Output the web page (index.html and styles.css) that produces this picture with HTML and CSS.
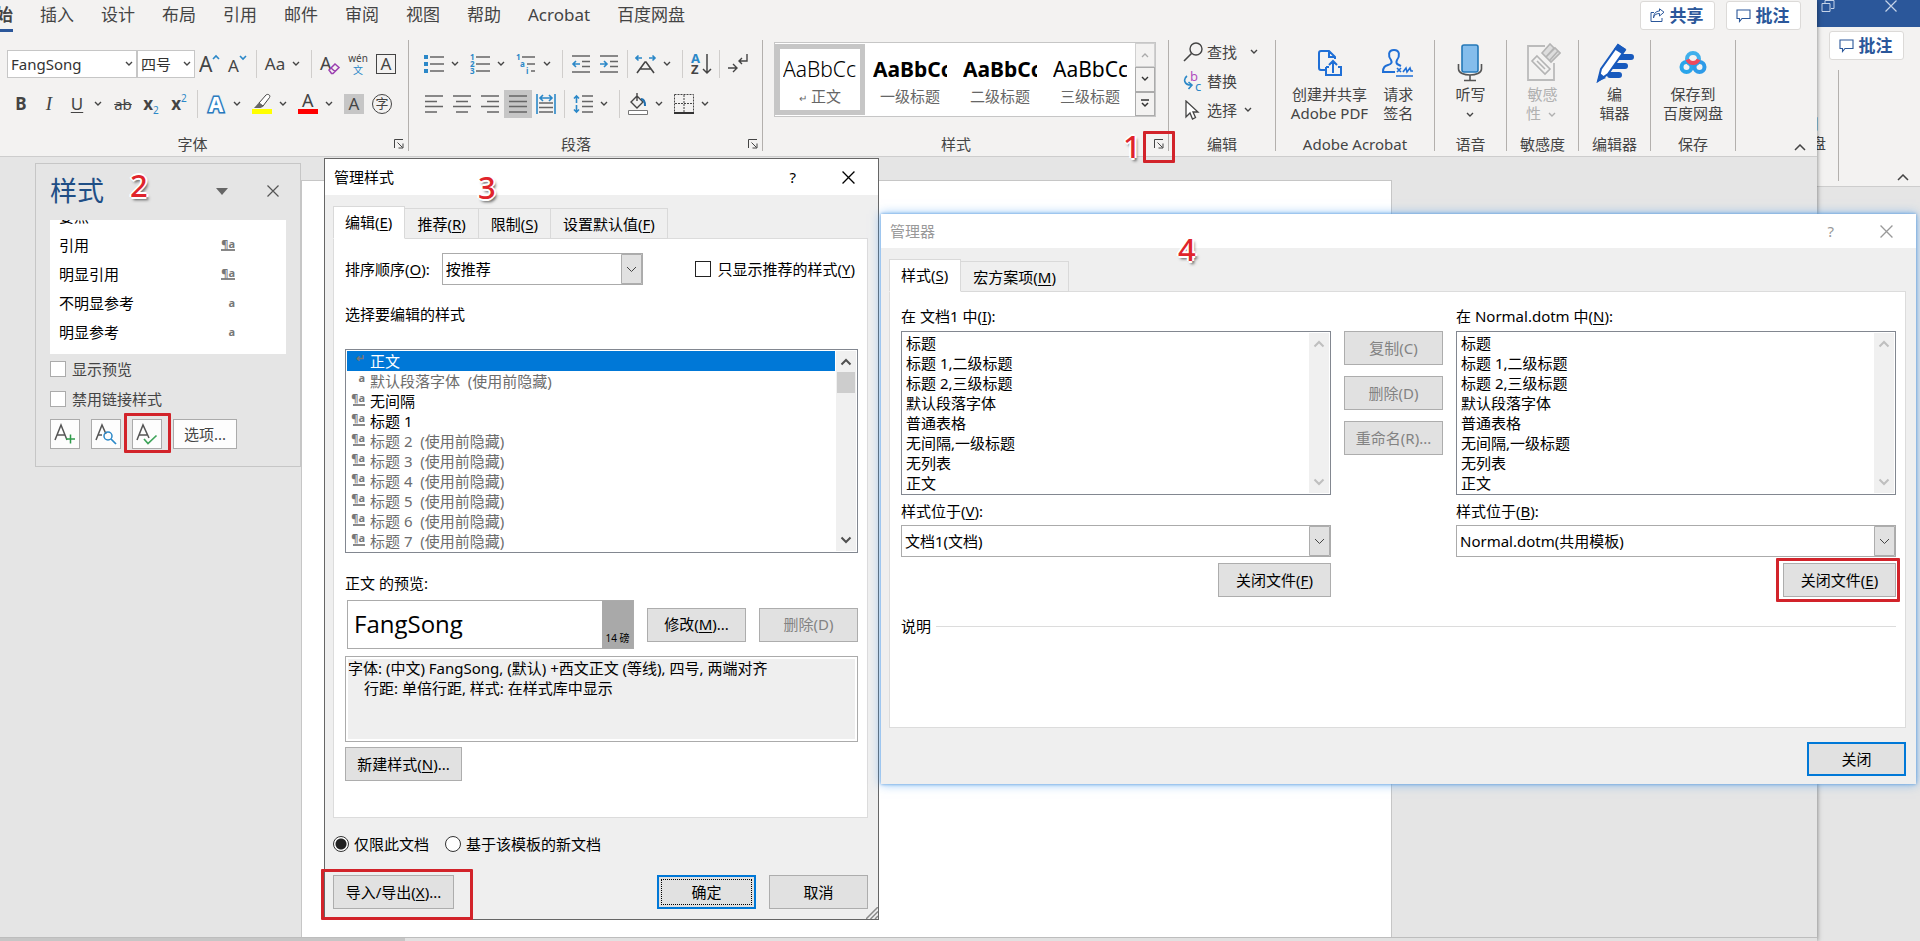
FILE: index.html
```html
<!DOCTYPE html>
<html lang="zh-CN">
<head>
    <meta charset="UTF-8">
    <meta name="viewport" content="width=device-width, initial-scale=1.0">
    <title>管理样式</title>
    <link rel="stylesheet" href="styles.css">
</head>
<body>
    <!-- Shared icons -->
    <svg class="sprite" aria-hidden="true">
        <symbol id="chev" viewBox="0 0 8 6"><path d="M1 1l3 3 3-3" fill="none" stroke="currentColor" stroke-width="1.4"/></symbol>
        <symbol id="launch" viewBox="0 0 10 10"><path d="M.5 9V.5H9M3.500 3.500l5 5M9 4.500V9H4.500" fill="none" stroke="currentColor"/></symbol>
        <symbol id="caret" viewBox="0 0 12 7"><path d="M1 6l5-5 5 5" fill="none" stroke="currentColor" stroke-width="1.5"/></symbol>
        <symbol id="sb-up" viewBox="0 0 12 8"><path d="M1.500 6.500L6 2l4.500 4.500" fill="none" stroke="currentColor" stroke-width="2"/></symbol>
        <symbol id="sb-down" viewBox="0 0 12 8"><path d="M1.500 1.500L6 6l4.500-4.500" fill="none" stroke="currentColor" stroke-width="2"/></symbol>
        <symbol id="close" viewBox="0 0 12 12"><path d="M.5.5l11 11M11.500.5l-11 11" fill="none" stroke="currentColor" stroke-width="1.2"/></symbol>
        <symbol id="comment" viewBox="0 0 15 14"><path d="M1 1h13v8.500H6L3.500 12.500V9.500H1z" fill="none" stroke="currentColor" stroke-width="1.1"/></symbol>
    </svg>

    <!-- Window behind -->
    <div class="window back-window">
        <div class="back-title">
            <svg width="14" height="12" viewBox="0 0 14 12"><path d="M1 3.500h8v8H1zM4 3V.5h9v8h-3" fill="none" stroke="#c5d3e8"/></svg>
            <svg width="12" height="12"><use href="#close"/></svg>
        </div>
        <div class="tab-row">
            <div class="tab-actions"><button class="pill"><svg width="15" height="14"><use href="#comment"/></svg>批注</button></div>
        </div>
        <div class="ribbon">
            <div class="group g-save"><div class="bigs"><button class="big"><span class="pic"></span><span>保存到<br>百度网盘</span></button></div></div>
            <button class="collapse" aria-label="折叠功能区"><svg width="12" height="7"><use href="#caret"/></svg></button>
        </div>
    </div>

    <!-- Main window -->
    <div class="window main-window">
        <div class="tab-row">
            <nav class="tabs">
                <a href="#" class="current">开始</a>
                <a href="#">插入</a>
                <a href="#">设计</a>
                <a href="#">布局</a>
                <a href="#">引用</a>
                <a href="#">邮件</a>
                <a href="#">审阅</a>
                <a href="#">视图</a>
                <a href="#">帮助</a>
                <a href="#">Acrobat</a>
                <a href="#">百度网盘</a>
            </nav>
            <div class="tab-actions">
                <button class="pill"><svg width="15" height="15" viewBox="0 0 15 15"><path d="M4 4.500H1v9h11V10M3.500 10c.5-3 2.500-4.500 6-4.500V8L14 4.200 9.500.8V3C5.500 3.200 3.500 6 3.500 10z" fill="none" stroke="currentColor"/></svg>共享</button>
                <button class="pill"><svg width="15" height="14"><use href="#comment"/></svg>批注</button>
            </div>
        </div>

        <div class="ribbon">
            <section class="group g-font">
                <div class="tools">
                    <select class="font-select" aria-label="字体"><option>FangSong</option></select>
                    <select class="size-select" aria-label="字号"><option>四号</option></select>
                    <button class="tool" aria-label="增大字号"><svg width="22" height="22" viewBox="0 0 22 22"><text x="0" y="19" font-size="21">A</text><path d="M14 6l3-3 3 3" class="blue"/></svg></button>
                    <button class="tool" aria-label="减小字号"><svg width="22" height="22" viewBox="0 0 22 22"><text x="1" y="19" font-size="17">A</text><path d="M13 3l3 3 3-3" class="blue"/></svg></button>
                    <span class="sep"></span>
                    <button class="tool">Aa</button><svg class="chev"><use href="#chev"/></svg>
                    <span class="sep"></span>
                    <button class="tool" aria-label="清除格式"><svg width="22" height="22" viewBox="0 0 22 22"><text x="1" y="17" font-size="18">A</text><path d="M10 17l6-6 4 3.500-6 6h-1.500zM12 15l4 3.500" fill="#f3f2f1" stroke="#9b3fb0" stroke-width="1.500"/></svg></button>
                    <button class="tool pinyin">wén<b>文</b></button>
                    <button class="tool" aria-label="字符边框"><span class="boxed">A</span></button>
                </div>
                <div class="tools">
                    <button class="tool"><b>B</b></button>
                    <button class="tool"><i>I</i></button>
                    <button class="tool"><u>U</u></button><svg class="chev"><use href="#chev"/></svg>
                    <button class="tool"><s>ab</s></button>
                    <button class="tool"><b>x</b><sub>2</sub></button>
                    <button class="tool"><b>x</b><sup>2</sup></button>
                    <span class="sep"></span>
                    <button class="tool" aria-label="文本效果"><span class="glow">A</span></button><svg class="chev"><use href="#chev"/></svg>
                    <button class="tool" aria-label="突出显示"><svg width="22" height="22" viewBox="0 0 22 22"><path d="M8 10l7-8c1.500-1.500 5 0 3.500 2.500L12 13z" fill="#fff" stroke="#444"/><path d="M8 9.500l4.500 4-3 1.500H3z" fill="#666"/><path d="M1 16h20v5H1z" fill="#ff0"/></svg></button><svg class="chev"><use href="#chev"/></svg>
                    <button class="tool" aria-label="字体颜色"><svg width="22" height="22" viewBox="0 0 22 22"><text x="5" y="14" font-size="18">A</text><path d="M1 16h20v5H1z" fill="#f00"/></svg></button><svg class="chev"><use href="#chev"/></svg>
                    <button class="tool" aria-label="字符底纹"><span class="shaded">A</span></button>
                    <button class="tool" aria-label="带圈字符"><span class="circled">字</span></button>
                </div>
                <div class="caption"><span>字体</span><button class="launch" aria-label="字体设置"><svg width="10" height="10"><use href="#launch"/></svg></button></div>
            </section>

            <section class="group g-para">
                <div class="tools">
                    <button class="tool" aria-label="项目符号"><svg width="20" height="20" viewBox="0 0 20 20"><path d="M0 1h4v4H0zM0 8h4v4H0zM0 15h4v4H0z" fill="#2b88c8"/><path d="M6 3h14M6 10h14M6 17h14" class="line"/></svg></button><svg class="chev"><use href="#chev"/></svg>
                    <button class="tool" aria-label="编号"><svg width="20" height="20" viewBox="0 0 20 20"><g class="num"><text x="0" y="6">1</text><text x="0" y="13">2</text><text x="0" y="20">3</text></g><path d="M6 3h14M6 10h14M6 17h14" class="line"/></svg></button><svg class="chev"><use href="#chev"/></svg>
                    <button class="tool" aria-label="多级列表"><svg width="20" height="20" viewBox="0 0 20 20"><g class="num"><text x="0" y="6">1</text><text x="4" y="13">a</text><text x="10" y="20">i</text></g><path d="M6 3h13M11 10h8M15 17h4" class="line"/></svg></button><svg class="chev"><use href="#chev"/></svg>
                    <span class="sep"></span>
                    <button class="tool" aria-label="减少缩进"><svg width="20" height="20" viewBox="0 0 20 20"><path d="M1 2h18M11 7.500h8M11 12.500h8M1 18h18" class="line"/><path d="M9 10H2m3-3l-3 3 3 3" class="blue"/></svg></button>
                    <button class="tool" aria-label="增加缩进"><svg width="20" height="20" viewBox="0 0 20 20"><path d="M1 2h18M11 7.500h8M11 12.500h8M1 18h18" class="line"/><path d="M1 10h7M5 7l3 3-3 3" class="blue"/></svg></button>
                    <span class="sep"></span>
                    <button class="tool" aria-label="中文版式"><svg width="22" height="22" viewBox="0 0 22 22"><path d="M2 20l8-11h1l8 11M5.500 16h10" fill="none" stroke="#444" stroke-width="1.600"/><path d="M7 5H1m2.500-2.500L1 5l2.500 2.500M14 5h6m-2.500-2.500L20 5l-2.500 2.500" class="blue"/></svg></button><svg class="chev"><use href="#chev"/></svg>
                    <span class="sep"></span>
                    <button class="tool" aria-label="排序"><svg width="22" height="22" viewBox="0 0 22 22"><text x="1" y="10" font-size="13" font-weight="700" class="t-blue">A</text><text x="1" y="21" font-size="13" font-weight="700">Z</text><path d="M17 1v19m-4-4l4 4 4-4" fill="none" stroke="#444" stroke-width="1.500"/></svg></button>
                    <span class="sep"></span>
                    <button class="tool" aria-label="显示编辑标记"><svg width="22" height="22" viewBox="0 0 22 22"><path d="M20 1v7h-8m3-3l-3 3 3 3M1 15h9m-4-4l4 4-4 4" fill="none" stroke="#444" stroke-width="1.400"/></svg></button>
                </div>
                <div class="tools">
                    <button class="tool" aria-label="左对齐"><svg width="18" height="18" viewBox="0 0 18 18"><path d="M0 1h18M0 6.500h12M0 11.500h18M0 17h12" class="line"/></svg></button>
                    <button class="tool" aria-label="居中"><svg width="18" height="18" viewBox="0 0 18 18"><path d="M0 1h18M3 6.500h12M0 11.500h18M3 17h12" class="line"/></svg></button>
                    <button class="tool" aria-label="右对齐"><svg width="18" height="18" viewBox="0 0 18 18"><path d="M0 1h18M6 6.500h12M0 11.500h18M6 17h12" class="line"/></svg></button>
                    <button class="tool active" aria-label="两端对齐"><svg width="18" height="18" viewBox="0 0 18 18"><path d="M0 1h18M0 6.500h18M0 11.500h18M0 17h18" class="line"/></svg></button>
                    <button class="tool" aria-label="分散对齐"><svg width="20" height="20" viewBox="0 0 20 20"><path d="M3 9h14M3 13.500h14M3 18h14" class="line"/><path d="M1 0v20M19 0v20M4 4h12M7 1L4 4l3 3M13 1l3 3-3 3" class="blue"/></svg></button>
                    <span class="sep"></span>
                    <button class="tool" aria-label="行距"><svg width="20" height="20" viewBox="0 0 20 20"><path d="M9 2h11M9 7.500h11M9 12.500h11M9 18h11" class="line"/><path d="M3.500 9V2M1 4.500L3.500 2 6 4.500M3.500 11v7M1 15.500L3.500 18 6 15.500" class="blue"/></svg></button><svg class="chev"><use href="#chev"/></svg>
                    <span class="sep"></span>
                    <button class="tool" aria-label="底纹"><svg width="22" height="22" viewBox="0 0 22 22"><path d="M4 9l6-6 6 6-6 6zM10 3V0M10 3v5" fill="none" stroke="#444" stroke-width="1.400"/><path d="M14 6c3 0 4 3 4 7" fill="none" stroke="#1f6fb0" stroke-width="2"/><path d="M1.500 17.500h19v4h-19z" fill="#fff" stroke="#777"/></svg></button><svg class="chev"><use href="#chev"/></svg>
                    <button class="tool" aria-label="边框"><svg width="20" height="20" viewBox="0 0 20 20"><path d="M.5.5h19v18H.5zM10 1v17M1 9.500h18" fill="none" stroke="#444" stroke-dasharray="2 1"/><path d="M0 19h20" stroke="#333" stroke-width="2"/></svg></button><svg class="chev"><use href="#chev"/></svg>
                </div>
                <div class="caption"><span>段落</span><button class="launch" aria-label="段落设置"><svg width="10" height="10"><use href="#launch"/></svg></button></div>
            </section>

            <section class="group g-styles">
                <div class="gallery">
                    <button class="style-card selected"><span class="sample light">AaBbCcDd</span><span class="name"><small>↵</small> 正文</span></button>
                    <button class="style-card"><span class="sample heavy">AaBbCcDd</span><span class="name">一级标题</span></button>
                    <button class="style-card"><span class="sample heavy">AaBbCcDd</span><span class="name">二级标题</span></button>
                    <button class="style-card"><span class="sample">AaBbCcDd</span><span class="name">三级标题</span></button>
                    <div class="gallery-nav">
                        <button class="off" aria-label="上一行"><svg width="8" height="6" viewBox="0 0 8 6"><path d="M1 5l3-3 3 3" fill="none" stroke="currentColor" stroke-width="1.300"/></svg></button>
                        <button aria-label="下一行"><svg width="8" height="6"><use href="#chev"/></svg></button>
                        <button aria-label="其他"><svg width="8" height="9" viewBox="0 0 8 9"><path d="M0 1h8M1 4l3 3 3-3" fill="none" stroke="currentColor" stroke-width="1.500"/></svg></button>
                    </div>
                </div>
                <div class="caption"><span>样式</span><button class="launch" aria-label="样式窗格"><svg width="10" height="10"><use href="#launch"/></svg></button></div>
            </section>

            <section class="group g-edit">
                <div class="edits">
                    <button><svg width="20" height="20" viewBox="0 0 20 20"><circle cx="13" cy="7" r="6" fill="none" stroke="#444" stroke-width="1.400"/><path d="M8.500 11.500L1 19" stroke="#444" stroke-width="1.600"/></svg>查找<svg class="chev far"><use href="#chev"/></svg></button>
                    <button><svg width="20" height="20" viewBox="0 0 20 20"><text x="7" y="10" font-size="13" class="t-purple">b</text><text x="12" y="20" font-size="13" class="t-blue">c</text><path d="M4 5C0 8 1 14 8 14M5.500 11L9 14l-3.500 4" class="blue"/></svg>替换</button>
                    <button><svg width="20" height="20" viewBox="0 0 20 20"><path d="M3 1v16l4-4 2.500 6 3-1.500L10 12h5z" fill="#fff" stroke="#444" stroke-width="1.300"/></svg>选择<svg class="chev"><use href="#chev"/></svg></button>
                </div>
                <div class="caption"><span>编辑</span></div>
            </section>

            <section class="group g-adobe">
                <div class="bigs">
                    <button class="big"><span class="pic"><svg width="26" height="28" viewBox="0 0 26 28"><path d="M8 21H4c-1.500 0-2-.8-2-2V4c0-1.500.7-2 2-2h8l6 6v2M12 2v6h6M16 24V12m-4 4l4-4 4 4M9 18v8h15v-8h-3M9 18h3" fill="none" stroke="#1f6fd6" stroke-width="2"/></svg></span><span>创建并共享<br>Adobe PDF</span></button>
                    <button class="big"><span class="pic"><svg width="32" height="30" viewBox="0 0 32 30"><path d="M13 24H1c0-5 2-6 5-7 4-1 4-3 3-5-3-4-3-10 3-10s6 6 3 10c-1 2-1 4 2 5l2 1" fill="none" stroke="#1f6fd6" stroke-width="2"/><path d="M15 20l4 4m0-4l-4 4m6 0l3-4 1 4 3-4 1 3h2M14 28h17" fill="none" stroke="#1f6fd6" stroke-width="1.600"/></svg></span><span>请求<br>签名</span></button>
                </div>
                <div class="caption"><span>Adobe Acrobat</span></div>
            </section>

            <section class="group g-voice">
                <div class="bigs"><button class="big"><span class="pic"><svg width="26" height="38" viewBox="0 0 26 38"><path d="M1.500 20v5c0 8 23 8 23 0v-5M13 31v5M7 36.500h12" fill="none" stroke="#555" stroke-width="1.600"/><rect x="5" y="1" width="16" height="27" rx="2" fill="#84bdec" stroke="#2478b8" stroke-width="1.600"/></svg></span><span>听写<br><svg class="chev"><use href="#chev"/></svg></span></button></div>
                <div class="caption"><span>语音</span></div>
            </section>

            <section class="group g-sense">
                <div class="bigs"><button class="big" disabled><span class="pic"><svg width="36" height="40" viewBox="0 0 36 40"><path d="M20 3H3v34h26V20" fill="none" stroke="#bbb" stroke-width="1.800"/><path d="M12 13l13 13-5 5L7 18zM12 18l8 8" fill="none" stroke="#b4b4b4" stroke-width="1.600"/><path d="M17 10l8-9 4 4-8 9zM21 14l9-9 5 5-9 9zM25 17l8-9" fill="#ddd" stroke="#b4b4b4" stroke-width="1.600"/></svg></span><span>敏感<br>性 <svg class="chev"><use href="#chev"/></svg></span></button></div>
                <div class="caption"><span>敏感度</span></div>
            </section>

            <section class="group g-editor">
                <div class="bigs"><button class="big"><span class="pic"><svg width="38" height="40" viewBox="0 0 38 40"><path d="M23 14h12M17 23h12M14 32h9" stroke="#185abd" stroke-width="6" stroke-linecap="round"/><path d="M2 38l3-12L22 2l7 5-17 24z" fill="#fff" stroke="#185abd" stroke-width="2"/><path d="M22 1l8 5-4 5-8-5zM1 39l3-9 6 5z" fill="#185abd"/></svg></span><span>编<br>辑器</span></button></div>
                <div class="caption"><span>编辑器</span></div>
            </section>

            <section class="group g-save">
                <div class="bigs"><button class="big"><span class="pic"><svg width="28" height="24" viewBox="0 0 28 24"><g fill="none" stroke-width="4"><circle cx="14" cy="8" r="6" stroke="#40b0ec"/><circle cx="7.500" cy="16" r="5" stroke="#2aa5ea"/><circle cx="20.500" cy="16" r="5" stroke="#2e9be8"/><path d="M8.500 8.500a6 6 0 0 0 11 0" stroke="#ee4a5e"/></g></svg></span><span>保存到<br>百度网盘</span></button></div>
                <div class="caption"><span>保存</span></div>
            </section>
            <button class="collapse" aria-label="折叠功能区"><svg width="12" height="7"><use href="#caret"/></svg></button>
        </div>

        <main class="workspace">
            <!-- Styles pane -->
            <aside class="pane">
                <header>
                    <h2>样式</h2>
                    <button aria-label="窗格选项"><svg width="12" height="7"><path d="M0 0h12L6 7z" fill="#666"/></svg></button>
                    <button aria-label="关闭窗格"><svg width="12" height="12"><use href="#close"/></svg></button>
                </header>
                <ul class="pane-list">
                    <li>要点</li>
                    <li>引用<span class="para">¶a</span></li>
                    <li>明显引用<span class="para">¶a</span></li>
                    <li>不明显参考<span>a</span></li>
                    <li>明显参考<span>a</span></li>
                </ul>
                <label class="check"><input type="checkbox"><span>显示预览</span></label>
                <label class="check"><input type="checkbox"><span>禁用链接样式</span></label>
                <div class="pane-buttons">
                    <button aria-label="新建样式"><svg width="22" height="24" viewBox="0 0 22 24"><path d="M1 18L7 3l6 15M3 13h8" fill="none" stroke="#555" stroke-width="1.500"/><path d="M12 17h9M16.500 12.500v9" stroke="#2f9a4a" stroke-width="1.500"/></svg></button>
                    <button aria-label="样式检查器"><svg width="22" height="24" viewBox="0 0 22 24"><path d="M1 18L7 3l4 9M3 13h4" fill="none" stroke="#555" stroke-width="1.500"/><circle cx="13" cy="14" r="4" fill="none" stroke="#2b88c8" stroke-width="1.500"/><path d="M16 17l5 5" stroke="#2b88c8" stroke-width="1.700"/></svg></button>
                    <button aria-label="管理样式"><svg width="22" height="24" viewBox="0 0 22 24"><path d="M1 18L7 3l6 13M3 13h8" fill="none" stroke="#555" stroke-width="1.500"/><path d="M8 17l4 4.500 8.500-8" fill="none" stroke="#3fa45a" stroke-width="1.700"/></svg></button>
                    <button class="options">选项...</button>
                </div>
            </aside>
            <div class="page"></div>
        </main>
        <div class="statusbar"></div>
    </div>

    <!-- Manage styles dialog -->
    <div class="window dialog manage" role="dialog" aria-label="管理样式">
        <header class="dialog-title"><h1>管理样式</h1><button aria-label="帮助">?</button><button aria-label="关闭"><svg width="13" height="13"><use href="#close"/></svg></button></header>
        <div class="dialog-body">
            <div class="dialog-tabs">
                <button class="on">编辑(<u>E</u>)</button>
                <button>推荐(<u>R</u>)</button>
                <button>限制(<u>S</u>)</button>
                <button>设置默认值(<u>F</u>)</button>
            </div>
            <div class="panel">
                <div class="sort-row">
                    <label for="sort">排序顺序(<u>O</u>):</label>
                    <select id="sort" class="combo"><option>按推荐</option></select>
                    <label class="check dark"><input type="checkbox"><span>只显示推荐的样式(<u>Y</u>)</span></label>
                </div>
                <p class="list-label">选择要编辑的样式</p>
                <div class="listbox">
                    <ul>
                        <li class="picked"><span class="mark">↵</span>正文</li>
                        <li class="dim"><span class="mark">a</span>默认段落字体&nbsp; (使用前隐藏)</li>
                        <li><span class="mark para">¶a</span>无间隔</li>
                        <li><span class="mark para">¶a</span>标题 1</li>
                        <li class="dim"><span class="mark para">¶a</span>标题 2&nbsp; (使用前隐藏)</li>
                        <li class="dim"><span class="mark para">¶a</span>标题 3&nbsp; (使用前隐藏)</li>
                        <li class="dim"><span class="mark para">¶a</span>标题 4&nbsp; (使用前隐藏)</li>
                        <li class="dim"><span class="mark para">¶a</span>标题 5&nbsp; (使用前隐藏)</li>
                        <li class="dim"><span class="mark para">¶a</span>标题 6&nbsp; (使用前隐藏)</li>
                        <li class="dim"><span class="mark para">¶a</span>标题 7&nbsp; (使用前隐藏)</li>
                    </ul>
                    <div class="scrollbar"><svg width="12" height="8"><use href="#sb-up"/></svg><span class="thumb"></span><svg width="12" height="8"><use href="#sb-down"/></svg></div>
                </div>
                <p class="preview-label">正文 的预览:</p>
                <div class="preview-row">
                    <div class="preview"><span>FangSong</span><small>14 磅</small></div>
                    <button class="btn">修改(<u>M</u>)...</button>
                    <button class="btn" disabled>删除(D)</button>
                </div>
                <div class="description">字体: (中文) FangSong, (默认) +西文正文 (等线), 四号, 两端对齐<p>行距: 单倍行距, 样式: 在样式库中显示</p></div>
                <button class="btn new-style">新建样式(<u>N</u>)...</button>
            </div>
            <div class="radios">
                <label><input type="radio" name="scope" checked>仅限此文档</label>
                <label><input type="radio" name="scope">基于该模板的新文档</label>
            </div>
            <footer>
                <button class="btn import">导入/导出(<u>X</u>)...</button>
                <button class="btn default"><span>确定</span></button>
                <button class="btn">取消</button>
            </footer>
        </div>
        <svg class="grip" width="12" height="12"><path d="M0 12L12 0M4.500 12L12 4.500M9 12l3-3" stroke="#8a8a8a" stroke-width="1.500"/></svg>
    </div>

    <!-- Organizer dialog -->
    <div class="window dialog organizer" role="dialog" aria-label="管理器">
        <header class="dialog-title"><h1>管理器</h1><button aria-label="帮助">?</button><button aria-label="关闭"><svg width="13" height="13"><use href="#close"/></svg></button></header>
        <div class="dialog-body">
            <div class="dialog-tabs">
                <button class="on">样式(<u>S</u>)</button>
                <button>宏方案项(<u>M</u>)</button>
            </div>
            <div class="panel">
                <div class="columns">
                    <div class="column">
                        <p>在 文档1 中(<u>I</u>):</p>
                        <div class="listbox">
                            <ul>
                                <li>标题</li>
                                <li>标题 1,二级标题</li>
                                <li>标题 2,三级标题</li>
                                <li>默认段落字体</li>
                                <li>普通表格</li>
                                <li>无间隔,一级标题</li>
                                <li>无列表</li>
                                <li>正文</li>
                            </ul>
                            <div class="scrollbar off"><svg width="12" height="8"><use href="#sb-up"/></svg><svg width="12" height="8"><use href="#sb-down"/></svg></div>
                        </div>
                        <label for="in-left">样式位于(<u>V</u>):</label>
                        <select id="in-left" class="combo"><option>文档1(文档)</option></select>
                        <button class="btn">关闭文件(<u>F</u>)</button>
                    </div>
                    <div class="middle">
                        <button class="btn" disabled>复制(C)</button>
                        <button class="btn" disabled>删除(D)</button>
                        <button class="btn" disabled>重命名(R)...</button>
                    </div>
                    <div class="column">
                        <p>在 Normal.dotm 中(<u>N</u>):</p>
                        <div class="listbox">
                            <ul>
                                <li>标题</li>
                                <li>标题 1,二级标题</li>
                                <li>标题 2,三级标题</li>
                                <li>默认段落字体</li>
                                <li>普通表格</li>
                                <li>无间隔,一级标题</li>
                                <li>无列表</li>
                                <li>正文</li>
                            </ul>
                            <div class="scrollbar off"><svg width="12" height="8"><use href="#sb-up"/></svg><svg width="12" height="8"><use href="#sb-down"/></svg></div>
                        </div>
                        <label for="in-right">样式位于(<u>B</u>):</label>
                        <select id="in-right" class="combo"><option>Normal.dotm(共用模板)</option></select>
                        <button class="btn">关闭文件(<u>E</u>)</button>
                    </div>
                </div>
                <div class="note"><span>说明</span></div>
            </div>
            <footer><button class="btn default">关闭</button></footer>
        </div>
    </div>

    <!-- Step callouts -->
    <div class="callout box-1"></div><b class="callout step step-1">1</b>
    <div class="callout box-2"></div><b class="callout step step-2">2</b>
    <div class="callout box-3"></div><b class="callout step step-3">3</b>
    <div class="callout box-4"></div><b class="callout step step-4">4</b>
</body>
</html>
```
FILE: styles.css
```css
* {
    margin: 0;
    padding: 0;
    box-sizing: border-box;
}

body {
    font-family: "Noto Sans", "Noto Sans CJK SC", sans-serif;
    font-size: 15px;
    line-height: 20px;
    color: #000;
    background: #e5e5e5;
    min-height: 100vh;
    overflow: hidden;
    position: relative;
}

button, select, input {
    font: inherit;
    color: inherit;
}

button {
    background: none;
    border: none;
    white-space: nowrap;
}

ul {
    list-style: none;
}

u {
    text-underline-offset: 2px;
}

.sprite {
    display: none;
}

.window {
    position: absolute;
    display: flex;
    flex-direction: column;
}

/* Windows */
.back-window {
    inset: 0;
    background: #e5e5e5;
}

.back-title {
    height: 27px;
    flex: none;
    display: flex;
    justify-content: flex-end;
    gap: 50px;
    padding-right: 23px;
    color: #c5d3e8;
    background: #2b579a;
}

.back-window .ribbon {
    justify-content: flex-end;
}

.back-window .collapse {
    margin-left: 58px;
}

.main-window {
    top: 0;
    bottom: 0;
    left: 0;
    right: 103px;
    color: #444;
    background: #e5e5e5;
    box-shadow: 0 0 5px rgba(0, 0, 0, 0.5);
}

/* Ribbon tabs */
.tab-row {
    height: 32px;
    flex: none;
    display: flex;
    align-items: flex-start;
    background: #f3f2f1;
    overflow: hidden;
}

.back-window .tab-row {
    height: 35px;
    padding-top: 3px;
}

.tabs {
    display: flex;
    gap: 27px;
    margin-left: -21px;
}

.tabs a {
    font-size: 17px;
    line-height: 24px;
    height: 32px;
    padding-top: 3px;
    color: #444;
    text-decoration: none;
}

.tabs .current {
    font-weight: 700;
    border-bottom: 3px solid #2b579a;
}

.tab-actions {
    display: flex;
    gap: 11px;
    margin-left: auto;
    padding: 1px 16px 0 0;
}

.pill {
    display: flex;
    align-items: center;
    justify-content: center;
    gap: 5px;
    width: 75px;
    height: 29px;
    padding-right: 2px;
    font-size: 17px;
    font-weight: 700;
    color: #2b579a;
    background: #fff;
    border: 1px solid #dcdad8;
    border-radius: 3px;
}

/* Ribbon */
.ribbon {
    height: 125px;
    flex: none;
    display: flex;
    padding-top: 8px;
    color: #444;
    background: #f3f2f1;
    border-bottom: 1px solid #cdcdcd;
}

.group {
    height: 111px;
    flex: none;
    display: flex;
    flex-direction: column;
    border-right: 1px solid #b3b0ad;
}

.g-font { width: 409px; padding-left: 7px; }
.g-para { width: 354px; padding-left: 11px; }
.g-styles { width: 406px; padding-left: 11px; }
.g-edit { width: 107px; }
.g-adobe { width: 159px; }
.g-voice { width: 72px; }
.g-sense { width: 72px; }
.g-editor { width: 72px; }
.g-save { width: 85px; }

.tools {
    display: flex;
    align-items: center;
    height: 28px;
    margin-top: 10px;
}

.tools + .tools {
    margin-top: 12px;
}

.tool {
    display: flex;
    align-items: center;
    justify-content: center;
    width: 28px;
    height: 28px;
    flex: none;
    font-size: 17px;
}

.tool.active {
    background: #c6c6c6;
}

.tool i {
    font-family: "Liberation Serif", serif;
    font-size: 19px;
}

.tool s {
    font-size: 15px;
}

.tool sub, .tool sup {
    font-size: 10px;
    line-height: 10px;
    color: #2b88c8;
}

.tool sub {
    align-self: flex-end;
    padding-bottom: 3px;
}

.tool sup {
    align-self: flex-start;
    padding-top: 3px;
}

.tool.pinyin {
    flex-direction: column;
    font-size: 10px;
    line-height: 12px;
}

.pinyin b {
    font-size: 10px;
    font-weight: 400;
    color: #2b88c8;
}

.boxed, .shaded, .circled {
    width: 20px;
    height: 20px;
    line-height: 17px;
    text-align: center;
    border: 1px solid #444;
}

.shaded {
    background: #c6c6c6;
    border-color: #c6c6c6;
}

.circled {
    font-size: 13px;
    border-radius: 50%;
}

.glow {
    font-size: 21px;
    font-weight: 700;
    color: #fff;
    -webkit-text-stroke: 3px #1f6fb5;
    paint-order: stroke fill;
    text-shadow: 0 0 3px #4aa3e0;
}

.chev {
    width: 14px;
    height: 6px;
    margin-right: 4px;
    flex: none;
}

.sep {
    width: 1px;
    height: 28px;
    margin: 0 4px;
    background: #d0cecc;
}

svg text {
    fill: #444;
}

svg .t-blue {
    fill: #2b88c8;
}

svg .t-purple {
    fill: #b04fc0;
}

.line {
    fill: none;
    stroke: #666;
    stroke-width: 1.5;
}

.blue {
    fill: none;
    stroke: #2b88c8;
    stroke-width: 1.6;
}

.num text {
    font-size: 8px;
    font-weight: 700;
    fill: #2b88c8;
}

.font-select, .size-select {
    appearance: none;
    height: 28px;
    padding-left: 3px;
    color: #333;
    border: 1px solid #c6c6c6;
    background: #fff url("data:image/svg+xml,%3Csvg xmlns='http://www.w3.org/2000/svg' width='8' height='6'%3E%3Cpath d='M1 1l3 3 3-3' fill='none' stroke='%23444' stroke-width='1.4'/%3E%3C/svg%3E") no-repeat right 3px center;
}

.font-select { width: 130px; }
.size-select { width: 58px; margin-right: 1px; }

.caption {
    display: flex;
    align-items: center;
    height: 14px;
    margin-top: auto;
    line-height: 14px;
    white-space: nowrap;
}

.caption span {
    flex: 1;
    text-align: center;
}

.launch {
    width: 18px;
    height: 10px;
    margin-left: 12px;
    line-height: 0;
}

/* Style gallery */
.gallery {
    display: flex;
    width: 382px;
    height: 75px;
    margin-top: 2px;
    background: #fff;
    border: 1px solid #c6c6c6;
}

.style-card {
    width: 90px;
    height: 71px;
    margin-top: 1px;
    padding: 3px;
    border: 5px solid transparent;
    overflow: hidden;
}

.style-card.selected {
    border-color: #c6c6c6;
}

.sample {
    display: block;
    height: 32px;
    font-size: 21px;
    line-height: 34px;
    text-align: left;
    color: #000;
    overflow: hidden;
}

.light { font-weight: 300; }
.heavy { font-weight: 700; }

.style-card .name {
    display: block;
    line-height: 24px;
    color: #666;
}

.name small {
    font-size: 10px;
}

.gallery-nav {
    display: flex;
    flex-direction: column;
    width: 20px;
}

.gallery-nav button {
    flex: 1;
    line-height: 0;
    color: #333;
    background: #f3f2f1;
    border: 1px solid #ababab;
}

.gallery-nav .off {
    color: #aaa;
    border-color: #d0d0d0;
}

.edits {
    padding: 0 0 0 14px;
}

.edits button {
    display: flex;
    align-items: center;
    gap: 4px;
    height: 29px;
}

.edits button:first-child {
    margin-top: -3px;
}

.edits .far {
    margin-left: 6px;
}

.bigs {
    display: flex;
    justify-content: center;
    gap: 14px;
}

.g-adobe .bigs {
    padding-right: 5px;
}

.big {
    line-height: 19px;
}

.big .pic {
    display: flex;
    align-items: center;
    justify-content: center;
    height: 45px;
}

.big:disabled {
    color: #b0b0b0;
}

.big .chev {
    margin: 0;
    vertical-align: middle;
}

.collapse {
    align-self: flex-end;
    height: 7px;
    line-height: 0;
    margin: 0 11px 5px auto;
}

/* Workspace */
.workspace {
    flex: 1;
    display: flex;
}

.page {
    flex: 1;
    margin: 23px 425px 0 0;
    background: #fff;
    border: 1px solid #c6c6c6;
    border-bottom: none;
}

.statusbar {
    height: 4px;
    background: linear-gradient(90deg, #c6c6c6 405px, #e1e1e1 405px);
    border-top: 1px solid #bdbdbd;
}

.pane {
    width: 266px;
    height: 304px;
    margin: 6px 0 0 35px;
    padding: 11px 14px 0;
    border: 1px solid #c6c6c6;
}

.pane header {
    display: flex;
    align-items: center;
    height: 32px;
}

.pane h2 {
    flex: 1;
    font-size: 27px;
    line-height: 32px;
    font-weight: 400;
    color: #1f4e85;
}

.pane header button {
    padding: 0 7px 0 32px;
    line-height: 0;
    color: #555;
}

.pane-list {
    height: 134px;
    display: flex;
    flex-direction: column;
    justify-content: flex-end;
    margin: 13px 0 7px;
    padding-bottom: 8px;
    color: #000;
    background: #fff;
    overflow: hidden;
}

.pane-list li {
    display: flex;
    flex: none;
    align-items: center;
    justify-content: space-between;
    height: 29px;
    padding: 0 51px 0 9px;
}

.pane-list span, .mark {
    font-size: 11px;
    line-height: 10px;
    font-weight: 700;
    color: #777;
}

.pane-list .para, .mark.para {
    border-bottom: 2px solid #888;
}

.check {
    display: flex;
    align-items: center;
    gap: 6px;
}

.pane .check {
    height: 16px;
    margin-bottom: 14px;
}

.check input {
    appearance: none;
    width: 16px;
    height: 16px;
    background: #fff;
    border: 1px solid #ababab;
}

.check.dark input {
    border-color: #222;
}

.pane-buttons {
    display: flex;
    gap: 11px;
    margin-top: -2px;
}

.pane-buttons button {
    width: 30px;
    height: 30px;
    line-height: 0;
    background: #fdfdfd;
    border: 1px solid #ababab;
}

.pane-buttons .options {
    width: 64px;
}

/* Dialogs */
.manage {
    top: 158px;
    left: 324px;
    width: 555px;
    border: 1px solid #666;
}

.organizer {
    top: 214px;
    left: 881px;
    right: 4px;
    box-shadow: 0 0 3px #5b9bdc, 0 0 10px rgba(60, 150, 240, 0.6);
}

.dialog-title {
    display: flex;
    align-items: center;
    height: 36px;
    padding: 0 23px 0 9px;
    background: #fff;
}

.dialog-title h1 {
    flex: 1;
    font-size: 15px;
    font-weight: 400;
}

.dialog-title button {
    margin-left: 46px;
    line-height: 0;
}

.organizer .dialog-title {
    height: 34px;
    color: #999;
}

.dialog-body {
    padding: 11px 10px 10px 8px;
    background: #efefef;
}

.dialog-tabs {
    display: flex;
    align-items: flex-end;
    height: 33px;
    margin-bottom: -1px;
}

.dialog-tabs button {
    height: 31px;
    padding: 0 12px;
    border: 1px solid #d9d9d9;
    border-left: none;
}

.dialog-tabs .on {
    position: relative;
    height: 33px;
    padding: 0 12px 1px 11px;
    background: #fff;
    border-left: 1px solid #d9d9d9;
    border-bottom-color: #fff;
}

.panel {
    padding: 14px 9px 36px 11px;
    background: #fff;
    border: 1px solid #dcdcdc;
}

.sort-row {
    display: flex;
    align-items: center;
}

.sort-row .combo {
    width: 201px;
    margin: 0 auto 0 12px;
}

.sort-row .check {
    margin-right: 3px;
}

.combo {
    appearance: none;
    height: 32px;
    padding-left: 3px;
    border: 1px solid #ababab;
    background: url("data:image/svg+xml,%3Csvg xmlns='http://www.w3.org/2000/svg' width='21' height='32'%3E%3Cpath d='M.5.5h20v29H.5z' fill='%23e1e1e1' stroke='%23adadad'/%3E%3Cpath d='M6 13l4.500 4.500L15 13' fill='none' stroke='%23444'/%3E%3C/svg%3E") no-repeat right top #fff;
}

.list-label {
    margin: 19px 0 25px;
}

.listbox {
    display: flex;
    justify-content: space-between;
    padding: 1px;
    border: 1px solid #828790;
    background: #fff;
}

.listbox ul {
    flex: 1;
}

.manage .listbox li {
    display: flex;
    height: 20px;
    line-height: 20px;
}

.organizer .listbox li {
    padding-left: 3px;
}

.listbox .picked {
    color: #fff;
    background: #0078d7;
}

.listbox .dim {
    color: #6d6d6d;
}

.mark {
    width: 12px;
    height: 13px;
    margin: 2px 5px 0 6px;
    display: flex;
    justify-content: flex-end;
}

.scrollbar {
    display: flex;
    flex-direction: column;
    align-items: center;
    justify-content: space-between;
    width: 20px;
    margin-left: 1px;
    padding: 7px 0;
    color: #505050;
    background: #f0f0f0;
}

.scrollbar.off {
    color: #bfbfbf;
}

.scrollbar .thumb {
    width: 18px;
    height: 21px;
    margin: 6px 0 auto;
    background: #cdcdcd;
}

.preview-label {
    margin: 20px 0 7px;
}

.preview-row {
    display: flex;
    align-items: center;
    gap: 13px;
    padding-left: 2px;
}

.preview {
    flex: 1;
    display: flex;
    justify-content: space-between;
    height: 49px;
    border: 1px solid #ababab;
}

.preview span {
    padding-left: 6px;
    font-family: "Open Sans", sans-serif;
    font-size: 24px;
    line-height: 46px;
}

.preview small {
    width: 31px;
    padding-top: 27px;
    font-size: 10px;
    text-align: center;
    background: #a9a9a9;
}

.btn {
    width: 99px;
    height: 34px;
    padding-bottom: 1px;
    background: #e1e1e1;
    border: 1px solid #adadad;
}

.btn:disabled {
    color: #838383;
}

.btn.default {
    padding: 2px;
    border: 2px solid #0078d7;
}

.btn.default span {
    display: block;
    line-height: 24px;
    border: 1px dotted #000;
}

.description {
    height: 86px;
    margin: 7px 0 5px;
    padding: 1px 0 0 2px;
    background: #efefef;
    border: 1px solid #ababab;
    box-shadow: inset 0 0 0 2px #fff;
}

.description p {
    padding-left: 16px;
}

.new-style {
    width: 117px;
}

.radios {
    display: flex;
    gap: 16px;
    margin: 16px 0 21px;
}

.radios label {
    display: flex;
    align-items: center;
    gap: 5px;
}

.radios input {
    appearance: none;
    width: 16px;
    height: 16px;
    background: #fff;
    border: 1px solid #333;
    border-radius: 50%;
}

.radios input:checked {
    background: radial-gradient(#222 5px, #fff 6px);
}

.dialog-body footer {
    display: flex;
    justify-content: flex-end;
    gap: 13px;
}

.import {
    width: 121px;
    margin-right: auto;
}

.grip {
    position: absolute;
    right: 0;
    bottom: 0;
}

.organizer .panel {
    padding-bottom: 91px;
}

.organizer .dialog-body {
    padding-bottom: 8px;
}

.organizer footer {
    margin-top: 14px;
}

.columns {
    display: grid;
    grid-template-columns: 43fr 99px 44fr;
    gap: 13px;
}

.column {
    display: flex;
    flex-direction: column;
}

.column .listbox {
    margin: 5px 0 6px;
}

.column .combo {
    margin: 4px 0 6px;
}

.column .btn {
    width: 113px;
    align-self: flex-end;
}

.middle {
    display: flex;
    flex-direction: column;
    gap: 11px;
    padding-top: 25px;
}

.note {
    display: flex;
    align-items: center;
    gap: 5px;
    margin-top: 19px;
}

.note::after {
    content: '';
    flex: 1;
    border-top: 1px solid #dcdcdc;
}

/* Callouts */
.callout {
    position: absolute;
    border: 3px solid #d2232a;
    border-radius: 1px;
    pointer-events: none;
}

.step {
    font-size: 31px;
    line-height: 32px;
    font-weight: 500;
    color: #e0242b;
    border: none;
    text-shadow: -2px 0 #fff, 2px 0 #fff, 0 -2px #fff, 0 2px #fff, 2px 3px 3px #555;
}

.box-1 { left: 1143px; top: 131px; width: 32px; height: 32px; }
.box-2 { left: 124px; top: 413px; width: 47px; height: 40px; }
.box-3 { left: 321px; top: 869px; width: 152px; height: 51px; }
.box-4 { right: 20px; top: 558px; width: 124px; height: 44px; }
.step-1 { left: 1123px; top: 130px; }
.step-2 { left: 130px; top: 169px; }
.step-3 { left: 478px; top: 171px; }
.step-4 { left: 1178px; top: 233px; }
```
